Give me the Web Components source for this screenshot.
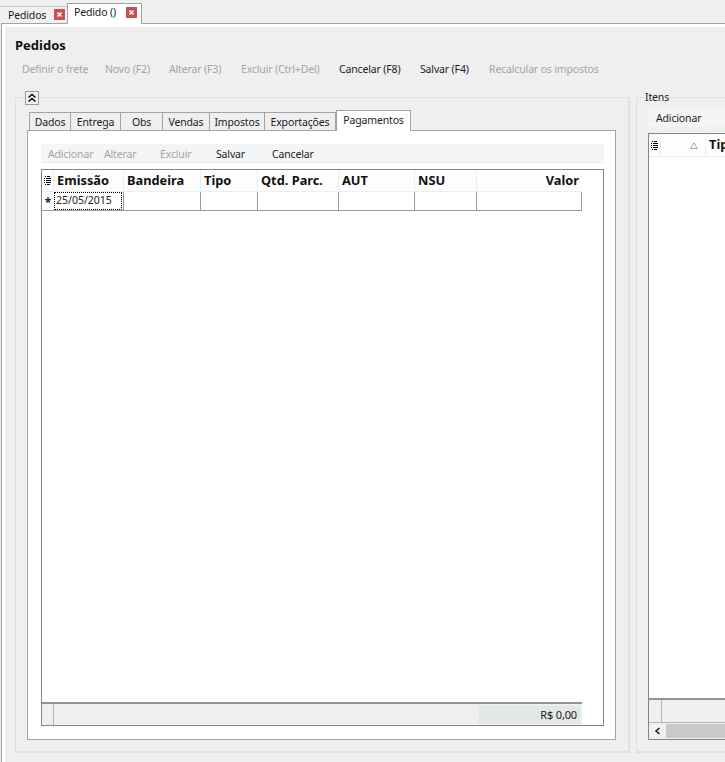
<!DOCTYPE html>
<html>
<head>
<meta charset="utf-8">
<style>
html, body { margin: 0; padding: 0; }
body { width: 725px; height: 762px; overflow: hidden; background: #f0f0f0; font: 10.5px "Noto Sans", "Open Sans", sans-serif; letter-spacing: -0.15px; color: #1c1c1c; }
main-window { display: block; }
</style>
</head>
<body>

<main-window>
  <doc-tab slot="tabs" label="Pedidos"></doc-tab>
  <doc-tab slot="tabs" label="Pedido ()" active></doc-tab>

  <h-title slot="head">Pedidos</h-title>
  <tool-bar slot="head" class="top" items="-Definir o frete:83,-Novo (F2):64,-Alterar (F3):72,-Excluir (Ctrl+Del):98,Cancelar (F8):81,Salvar (F4):69,-Recalcular os impostos:120"></tool-bar>

  <group-box slot="left">
    <collapse-btn slot="legend"></collapse-btn>
    <page-tabs>
      <page-tab w="42">Dados</page-tab>
      <page-tab w="50">Entrega</page-tab>
      <page-tab w="42">Obs</page-tab>
      <page-tab w="47">Vendas</page-tab>
      <page-tab w="55">Impostos</page-tab>
      <page-tab w="71">Exportações</page-tab>
      <page-tab w="75" active>Pagamentos</page-tab>
      <tool-bar slot="page" class="inner" items="-Adicionar:56,-Alterar:56,-Excluir:56,Salvar:56,Cancelar:56"></tool-bar>
      <data-grid slot="page"></data-grid>
    </page-tabs>
  </group-box>

  <group-box slot="right" legend="Itens">
    <items-panel></items-panel>
  </group-box>
</main-window>

<script>
const LINE = '#a3a3a3';

class DocTab extends HTMLElement {
  constructor() {
    super();
    const active = this.hasAttribute('active');
    this.attachShadow({mode: 'open'}).innerHTML = `
      <style>
        :host { display: block; box-sizing: border-box; }
        .tab { display: flex; align-items: center; box-sizing: border-box; color: #1a1a1a;
               border: 1px solid ${LINE}; border-bottom: 0; }
        .tab.off { width: 67px; height: 17px; margin-top: 6px; background: #f0f0f0; padding: 0 2px 1px 8px; border-width: 1px 0 0 0; border-top-color: #c8c8c8; }
        .tab.on { width: 75px; height: 21px; margin-top: 3px; background: #fff; padding: 0 4px 4px 6px; margin-bottom: -1px; }
        span { flex: 1; white-space: nowrap; }
        i { width: 11px; height: 11px; background: #c8504f; display: flex; align-items: center; justify-content: center; }
      </style>
      <div class="tab ${active ? 'on' : 'off'}">
        <span>${this.getAttribute('label')}</span>
        <i><svg width="7" height="7" viewBox="0 0 7 7"><path d="M1.5 1.5l4 4M5.5 1.5l-4 4" stroke="#fff" stroke-width="1.6" fill="none"/></svg></i>
      </div>`;
  }
}
customElements.define('doc-tab', DocTab);

class MainWindow extends HTMLElement {
  constructor() {
    super();
    this.attachShadow({mode: 'open'}).innerHTML = `
      <style>
        :host { display: block; width: 725px; height: 762px; overflow: hidden; }
        .strip { display: flex; height: 23px; position: relative; z-index: 1; }
        .frame { margin-left: 1px; height: 739px; box-sizing: border-box; border-top: 1px solid ${LINE}; border-left: 1px solid ${LINE}; padding: 3px 0 0 3px; background: #fff; }
        .body { background: #efefef; height: 735px; padding: 10px 0 0 10px; box-sizing: border-box; }
        .panels { display: flex; margin-top: 19px; width: 800px; }
      </style>
      <div class="strip"><slot name="tabs"></slot></div>
      <div class="frame">
        <div class="body">
          <slot name="head"></slot>
          <div class="panels">
            <slot name="left"></slot>
            <slot name="right"></slot>
          </div>
        </div>
      </div>`;
  }
}
customElements.define('main-window', MainWindow);

class HTitle extends HTMLElement {
  constructor() {
    super();
    this.attachShadow({mode: 'open'}).innerHTML = `
      <style>:host { display: block; font-weight: 700; font-size: 13px; letter-spacing: 0; line-height: 16px; color: #111; height: 16px; }</style>
      <slot></slot>`;
  }
}
customElements.define('h-title', HTitle);

// items: "label:width", a leading - means disabled
class ToolBar extends HTMLElement {
  constructor() {
    super();
    const items = this.getAttribute('items').split(',').map(s => s.split(':'));
    const html = items.map(([t, w]) => {
      const off = t[0] === '-';
      return `<span class="${off ? 'off' : ''}" style="width:${w}px">${off ? t.slice(1) : t}</span>`;
    }).join('');
    this.attachShadow({mode: 'open'}).innerHTML = `
      <style>
        :host { display: block; }
        .bar { display: flex; height: 19px; align-items: center; white-space: nowrap; color: #1c1c1c; }
        .off { color: #a4a4a4; }
        :host(.top) .bar { margin: 6px 0 0 7px; }
        :host(.inner) .bar { padding: 2px 0 0 7px; background: #f4f5f6; border-bottom: 1px solid #ebebeb; height: 16px; }
      </style>
      <div class="bar">${html}</div>`;
  }
}
customElements.define('tool-bar', ToolBar);

class GroupBox extends HTMLElement {
  constructor() {
    super();
    const legend = this.getAttribute('legend');
    this.attachShadow({mode: 'open'}).innerHTML = `
      <style>
        :host { display: block; position: relative; flex: none; box-sizing: border-box; height: 656px; border: 2px solid #e0e0e0; border-width: 1px 2px 2px 1px; }
        :host([slot=left]) { width: 615px; padding: 12px 12px 11px 11px; margin-right: 6px; }
        :host([slot=right]) { width: 300px; padding: 10px 0 11px 11px; }
        .legend { position: absolute; left: 7px; top: -7px; background: #efefef; padding: 0 1px; line-height: 13px; color: #1c1c1c; }
        :host([slot=left]) .legend { left: 9px; top: -7px; padding: 0; }
      </style>
      <div class="legend">${legend || ''}<slot name="legend"></slot></div>
      <slot></slot>`;
  }
}
customElements.define('group-box', GroupBox);

class CollapseBtn extends HTMLElement {
  constructor() {
    super();
    this.attachShadow({mode: 'open'}).innerHTML = `
      <style>
        :host { display: block; width: 14px; height: 14px; box-sizing: border-box; border: 1px solid #999; background: #f4f4f4; }
        svg { display: block; }
      </style>
      <svg width="12" height="12" viewBox="0 0 12 12"><path d="M2.5 5.5L6 2.5l3.5 3M2.5 9.5L6 6.5l3.5 3" fill="none" stroke="#000" stroke-width="1.4"/></svg>`;
  }
}
customElements.define('collapse-btn', CollapseBtn);

class PageTab extends HTMLElement {
  constructor() {
    super();
    this.attachShadow({mode: 'open'}).innerHTML = `
      <style>
        :host { display: block; box-sizing: border-box; width: ${this.getAttribute('w')}px; height: 18px; margin-top: 2px; background: #efefef;
                border: 1px solid ${LINE}; border-bottom: 0; border-left-width: 0; text-align: center; line-height: 19px; white-space: nowrap; color: #1c1c1c; }
        :host(:first-of-type) { border-left-width: 1px; }
        :host([active]) { height: 21px; margin-top: 0; margin-bottom: -1px; background: #fff; position: relative; z-index: 1; line-height: 19px; border-left-width: 1px; }
      </style>
      <slot></slot>`;
  }
}
customElements.define('page-tab', PageTab);

class PageTabs extends HTMLElement {
  constructor() {
    super();
    this.attachShadow({mode: 'open'}).innerHTML = `
      <style>
        :host { display: block; }
        .heads { display: flex; padding-left: 2px; }
        .page { box-sizing: border-box; height: 610px; background: #fff; border: 1px solid ${LINE}; padding: 13px 11px 13px 13px; }
        ::slotted(data-grid) { margin-top: 6px; }
      </style>
      <div class="heads"><slot></slot></div>
      <div class="page"><slot name="page"></slot></div>`;
  }
}
customElements.define('page-tabs', PageTabs);

const LIST_ICON = `<svg width="7" height="9" viewBox="0 0 7 9" shape-rendering="crispEdges"><path d="M1 .5h1M3 .5h3M0 2.5h1M2 2.5h5M0 4.5h1M2 4.5h5M0 6.5h1M2 6.5h5M1 8.5h1M3 8.5h3" stroke="#000" fill="none"/></svg>`;

class DataGrid extends HTMLElement {
  constructor() {
    super();
    const cols = [
      ['Emissão', 70], ['Bandeira', 77], ['Tipo', 57], ['Qtd. Parc.', 81],
      ['AUT', 76], ['NSU', 62], ['Valor', 105, 'r']
    ];
    const head = cols.map(([t, w, a]) => `<div class="hc ${a || ''}" style="width:${w}px">${t}</div>`).join('');
    const row = cols.map(([t, w], i) => `<div class="c" style="width:${w}px">${i === 0 ? '<span class="focus">25/05/2015</span>' : ''}</div>`).join('');
    this.attachShadow({mode: 'open'}).innerHTML = `
      <style>
        :host { box-sizing: border-box; height: 557px; border: 1px solid #858585; background: #fff; display: flex; flex-direction: column; }
        .hd { display: flex; height: 22px; width: 540px; box-sizing: border-box; border-bottom: 1px solid #e8eef5; background: #fdfdfd; }
        .ind { width: 12px; flex: none; box-sizing: border-box; border-right: 1px solid #e8eef5; display: flex; align-items: center; justify-content: center; }
        .hc { box-sizing: border-box; flex: none; font-weight: 700; font-size: 12.8px; letter-spacing: 0; line-height: 21px; padding-left: 3px; border-right: 1px solid #e8eef5; color: #111; white-space: nowrap; }
        .hc.r { text-align: right; padding: 0 3px 0 0; border-right: 0; }
        .rw { display: flex; height: 19px; width: 540px; box-sizing: border-box; border-bottom: 1px solid #9a9a9a; }
        .rw .ind { border-right: 0; font-size: 12px; font-weight: 700; line-height: 18px; padding-top: 4px; }
        .c { box-sizing: border-box; flex: none; border-right: 1px solid #9a9a9a; }
        .focus { display: block; box-sizing: border-box; height: 18px; margin-left: 0; width: 68px; border: 1px dotted #000; line-height: 15px; padding-left: 1px; letter-spacing: 0; color: #222; }
        .sp { flex: 1; }
        .ft { display: flex; height: 21px; border-top: 2px solid #959595; background: #efefef; width: 540px; }
        .ft .a { width: 11px; border-right: 1px solid #b5b5b5; flex: none; }
        .ft .b { flex: 1; }
        .ft .v { width: 103px; margin: 1px 1px 1px 0; background: #e4e7e8; border: 1px solid #e8ecec; box-sizing: border-box; text-align: right; padding-right: 3px; line-height: 17px; font-size: 11px; color: #222; }
      </style>
      <div class="hd"><div class="ind">${LIST_ICON}</div>${head}</div>
      <div class="rw"><div class="ind">*</div>${row}</div>
      <div class="sp"></div>
      <div class="ft"><div class="a"></div><div class="b"></div><div class="v">R$ 0,00</div></div>`;
  }
}
customElements.define('data-grid', DataGrid);

class ItemsPanel extends HTMLElement {
  constructor() {
    super();
    this.attachShadow({mode: 'open'}).innerHTML = `
      <style>
        :host { display: block; }
        .bar { height: 19px; background: #f4f5f6; padding-left: 8px; line-height: 20px; }
        .grid { box-sizing: border-box; height: 607px; margin-top: 6px; border: 1px solid #858585; background: #fff; display: flex; flex-direction: column; }
        .hd { display: flex; height: 22px; border-bottom: 1px solid #e8eef5; background: #fdfdfd; }
        .ind { width: 12px; box-sizing: border-box; border-right: 1px solid #e8eef5; display: flex; align-items: center; justify-content: center; flex: none; }
        .sort { width: 45px; box-sizing: border-box; border-right: 1px solid #e8eef5; display: flex; align-items: center; justify-content: flex-end; padding-right: 7px; flex: none; }
        .hc { font-weight: 700; font-size: 12.8px; letter-spacing: 0; line-height: 21px; padding-left: 3px; color: #111; }
        .sp { flex: 1; }
        .ft { display: flex; height: 22px; border-top: 2px solid #959595; background: #efefef; border-bottom: 1px solid #b5b5b5; }
        .ft i { width: 12px; border-right: 1px solid #b5b5b5; }
        .scroll { display: flex; height: 16px; background: #efefef; align-items: stretch; }
        .arrow { width: 17px; display: flex; align-items: center; justify-content: center; }
        .thumb { flex: 1; background: #c9c9c9; margin: 1px 0; }
      </style>
      <div class="bar">Adicionar</div>
      <div class="grid">
        <div class="hd">
          <div class="ind">${LIST_ICON}</div>
          <div class="sort"><svg width="8" height="7" viewBox="0 0 8 7"><path d="M4 .8L7.3 6.5H.7z" fill="none" stroke="#a8a8a8"/></svg></div>
          <div class="hc">Tipo</div>
        </div>
        <div class="sp"></div>
        <div class="ft"><i></i></div>
        <div class="scroll">
          <div class="arrow"><svg width="7" height="8" viewBox="0 0 7 8"><path d="M5.5 1L2 4l3.5 3" fill="none" stroke="#222" stroke-width="1.6"/></svg></div>
          <div class="thumb"></div>
        </div>
      </div>`;
  }
}
customElements.define('items-panel', ItemsPanel);
</script>
</body>
</html>
